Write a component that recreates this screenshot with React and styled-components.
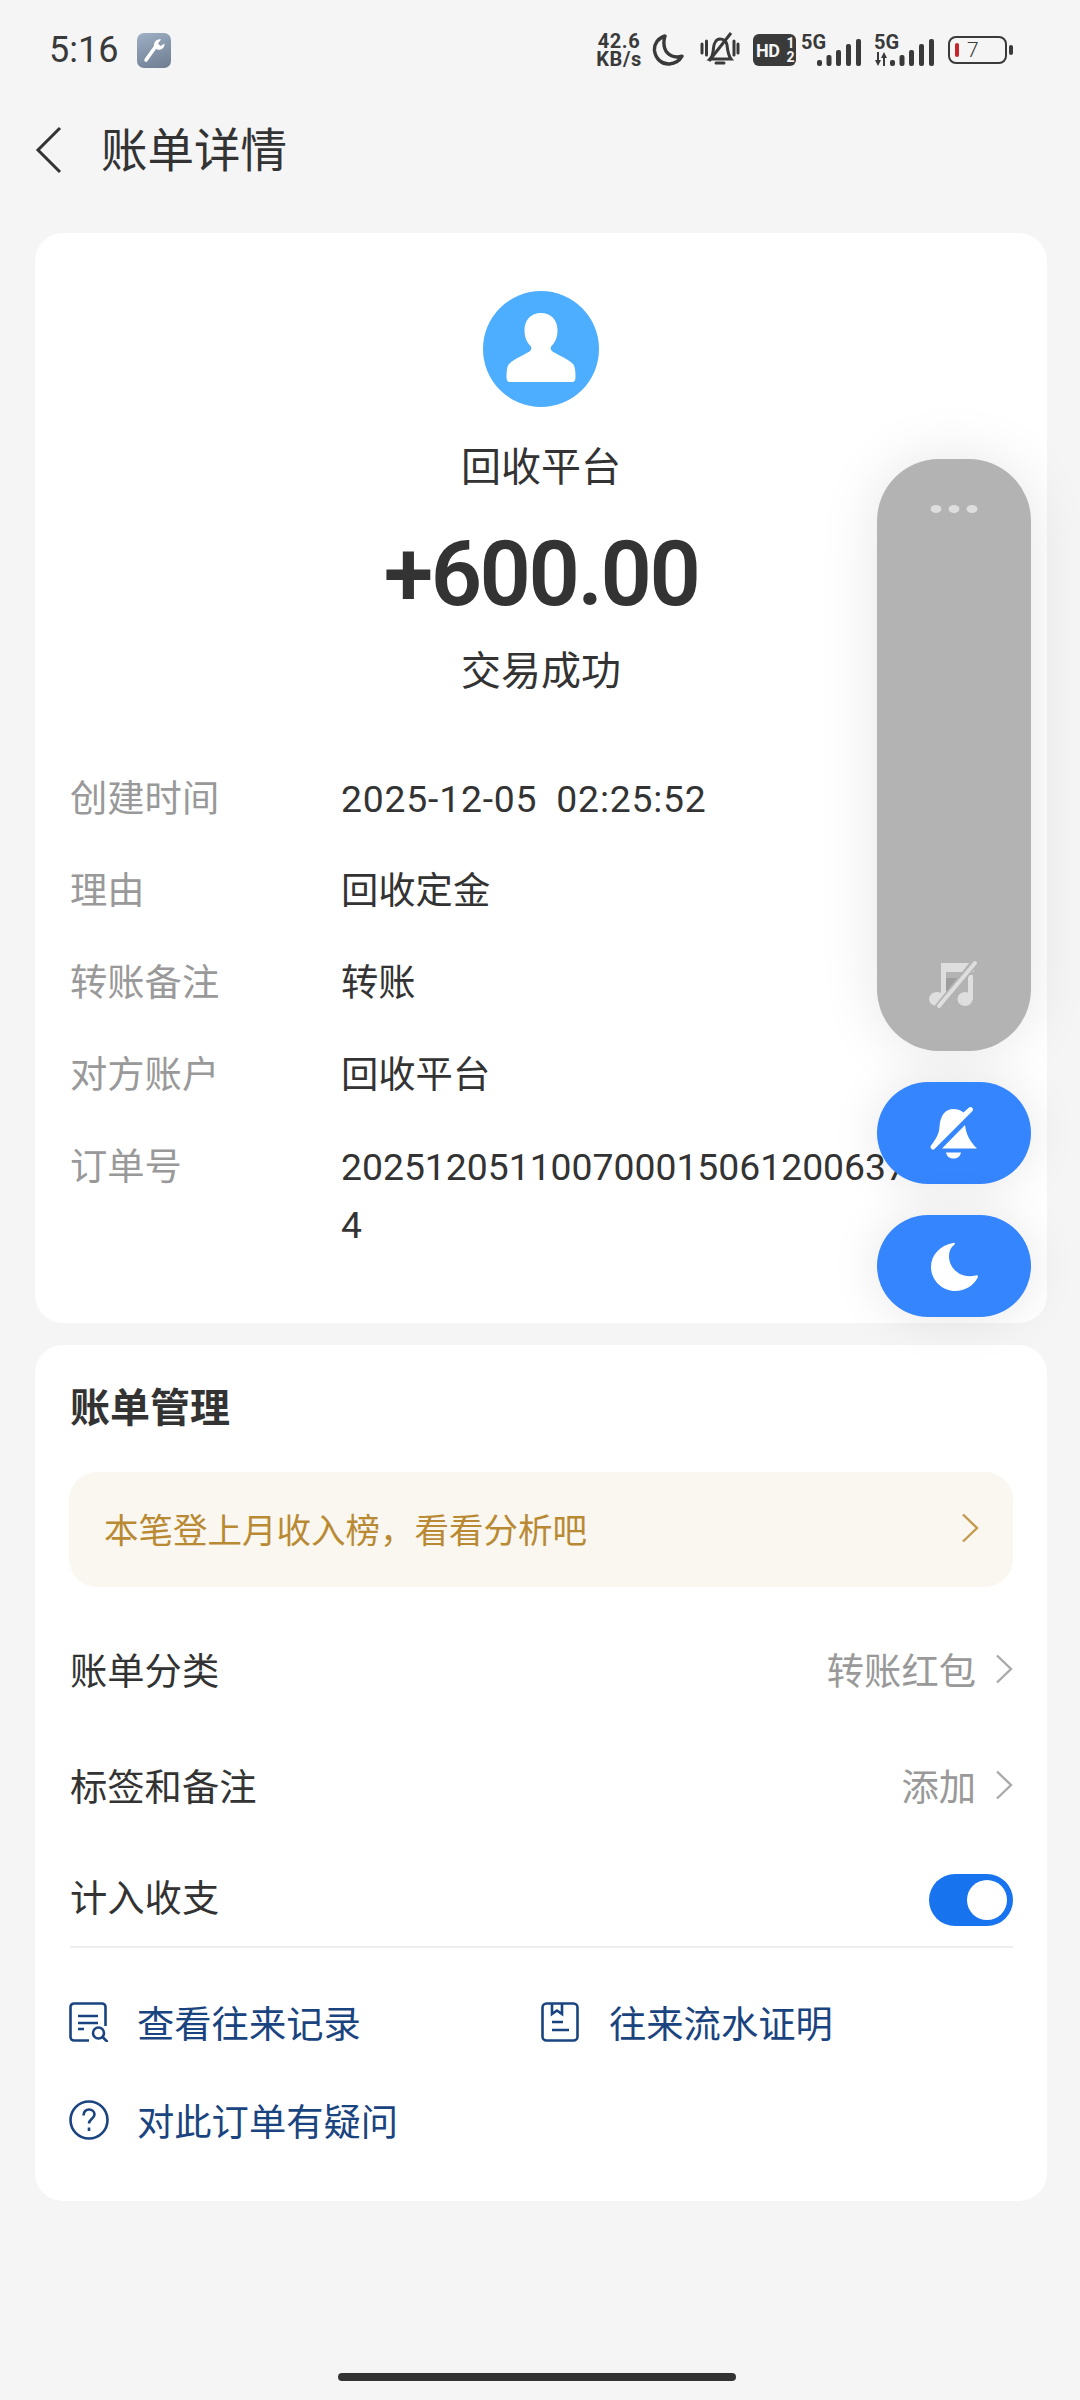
import { createGlobalStyle } from 'styled-components';
import styled from 'styled-components';

const GlobalStyle = createGlobalStyle`
  html, body {
    margin: 0;
    padding: 0;
    background: #f5f5f5;
  }
  * {
    box-sizing: border-box;
  }
`;

const Page = styled.div`
  position: relative;
  width: 1080px;
  height: 2400px;
  overflow: hidden;
  background: #f5f5f5;
  color: #333;
  font-family: Roboto, "Noto Sans CJK SC", sans-serif;
  font-size: 37.3px;
`;

const StatusBar = styled.div`
  display: flex;
  align-items: center;
  height: 100px;
  padding: 0 67px 0 49px;
`;

const Time = styled.span`
  font-size: 36px;
  line-height: 100px;
  color: #3a3a3a;
`;

const AppBadge = styled.span`
  display: flex;
  align-items: center;
  justify-content: center;
  width: 34px;
  height: 35px;
  margin-left: 19px;
  border-radius: 7px;
  background: linear-gradient(160deg, #9fb0c4, #6d7c90);
`;

const StatusIcons = styled.div`
  display: flex;
  align-items: center;
  margin-left: auto;
`;

const Speed = styled.span`
  display: flex;
  flex-direction: column;
  align-items: center;
  width: 50px;
  font-size: 20px;
  font-weight: 700;
  letter-spacing: 0.6px;
  color: #3a3a3a;
`;

const SpeedLine = styled.span`
  display: block;
  height: 18px;
  line-height: 18px;
`;

const StatusIcon = styled.svg`
  display: block;
  flex: none;
  margin-left: ${(props) => props.$gap || 0}px;
`;

const Header = styled.header`
  display: flex;
  align-items: center;
  height: 100px;
  padding-left: 34px;
`;

const Title = styled.h1`
  margin: 2px 0 0 37px;
  font-size: 46.5px;
  font-weight: 400;
  line-height: 100px;
  color: #333;
`;

const Card = styled.section`
  margin: ${(props) => props.$top}px 33px 0 35px;
  height: ${(props) => props.$height}px;
  border-radius: 28px;
  background: #fff;
`;

const Party = styled.div`
  display: flex;
  flex-direction: column;
  align-items: center;
  padding-top: 58px;
`;

const Avatar = styled.svg`
  display: block;
`;

const PartyName = styled.div`
  margin-top: 34px;
  font-size: 40px;
  line-height: 54px;
`;

const Amount = styled.div`
  margin-top: 30px;
  font-size: 90px;
  font-weight: 600;
  line-height: 100px;
  letter-spacing: -2.5px;
  color: #333;
`;

const PartyStatus = styled.div`
  margin-top: 20px;
  font-size: 40px;
  line-height: 54px;
`;

const InfoList = styled.div`
  display: flex;
  flex-direction: column;
  gap: 34px;
  margin-top: 71px;
  padding: 0 35px;
`;

const InfoRow = styled.div`
  display: flex;
  line-height: 58px;
`;

const InfoLabel = styled.span`
  flex: none;
  width: 271px;
  color: #999;
`;

const InfoValue = styled.span`
  flex: 1;
  min-width: 0;
  word-break: break-all;
  color: #333;
  word-spacing: ${(props) => (props.$wide ? '9px' : '0')};
  letter-spacing: ${(props) => (props.$wide ? '0.8px' : '0')};
`;

const ManageTitle = styled.h2`
  margin: 0;
  padding: 37px 35px 0;
  font-size: 40px;
  font-weight: 700;
  line-height: 54px;
  color: #333;
`;

const Banner = styled.div`
  display: flex;
  align-items: center;
  justify-content: space-between;
  height: 115px;
  margin: 36px 34px 0;
  padding: 0 34px 3px 35px;
  border-radius: 28px;
  background: #faf7f1;
  font-size: 34.5px;
  color: #b98a33;
`;

const SettingRow = styled.div`
  display: flex;
  align-items: center;
  justify-content: space-between;
  height: ${(props) => props.$height}px;
  margin: ${(props) => props.$top || 0}px 34px 0 35px;
`;

const SettingValue = styled.span`
  display: flex;
  align-items: center;
  gap: 19px;
  color: #999;
`;

const Toggle = styled.span`
  display: flex;
  align-items: center;
  justify-content: flex-end;
  width: 84px;
  height: 52px;
  margin-top: 8px;
  padding-right: 6px;
  border-radius: 26px;
  background: #1873ee;
`;

const ToggleKnob = styled.span`
  width: 40px;
  height: 40px;
  border-radius: 50%;
  background: #fff;
`;

const Divider = styled.div`
  height: 2px;
  margin: 0 34px 0 35px;
  background: #eceef0;
`;

const Links = styled.div`
  display: grid;
  grid-template-columns: 472px 1fr;
  row-gap: 40px;
  padding: 45px 34px 0;
`;

const LinkItem = styled.a`
  display: flex;
  align-items: center;
  gap: 28px;
  height: 58px;
  color: #1a4480;
`;

const FloatPanel = styled.div`
  position: absolute;
  top: 459px;
  left: 877px;
  display: flex;
  flex-direction: column;
  gap: 31px;
  width: 154px;
`;

const Drawer = styled.div`
  display: flex;
  flex-direction: column;
  align-items: center;
  justify-content: space-between;
  height: 592px;
  padding: 44px 0 41px;
  border-radius: 62px;
  background: #b3b3b3;
  box-shadow: 0 0 60px rgba(0, 0, 0, 0.1);
`;

const Pill = styled.div`
  display: flex;
  align-items: center;
  justify-content: center;
  height: 102px;
  border-radius: 51px;
  background: #3585fe;
  box-shadow: 0 0 50px rgba(0, 0, 0, 0.1);
`;

const HomeBar = styled.div`
  position: absolute;
  left: 338px;
  top: 2373px;
  width: 398px;
  height: 8px;
  border-radius: 4px;
  background: #333;
`;

const Chevron = ({ color = '#aaa', w = 18, h = 30 }) => (
  <svg width={w} height={h} viewBox="0 0 18 30" fill="none">
    <path d="M2 1.5 16 15 2 28.5" stroke={color} strokeWidth="2.4" />
  </svg>
);

const Bars = () => (
  <svg width="44" height="27" viewBox="0 0 44 27" fill="#3a3a3a">
    <rect x="0" y="21" width="5" height="6" rx="2" />
    <rect x="9.500" y="16" width="5" height="11" rx="2" />
    <rect x="19" y="11" width="5" height="16" rx="2" />
    <rect x="29" y="5" width="5" height="22" rx="2" />
    <rect x="39" y="0" width="5" height="27" rx="2" />
  </svg>
);

const NetworkWrap = styled.span`
  position: relative;
  display: block;
  flex: none;
  margin-left: ${(props) => props.$gap}px;
`;

const NetworkLabel = styled.span`
  position: absolute;
  left: 0;
  top: -2px;
  font-size: 20px;
  font-weight: 700;
  line-height: 20px;
  color: #3a3a3a;
`;

const NetworkBars = styled.span`
  display: flex;
  align-items: flex-end;
  justify-content: flex-end;
  gap: 2px;
  width: 60px;
  height: 32px;
`;

const Network = ({ arrows, gap }) => (
  <NetworkWrap $gap={gap}>
    <NetworkLabel>5G</NetworkLabel>
    <NetworkBars>
      {arrows && (
        <svg width="14" height="14" viewBox="0 0 14 14" fill="#3a3a3a">
          <path d="M3 0h2v8h2L4 14 1 8h2ZM9 14h2V6h2L10 0 7 6h2Z" />
        </svg>
      )}
      <Bars />
    </NetworkBars>
  </NetworkWrap>
);

const HdBadge = styled.span`
  display: flex;
  align-items: center;
  justify-content: space-between;
  width: 43px;
  height: 32px;
  margin-left: 13px;
  padding: 0 2px 0 3px;
  border-radius: 6px;
  background: #3a3a3a;
  color: #f5f5f5;
  font-size: 18px;
  font-weight: 700;
  letter-spacing: -0.5px;
`;

const HdDigits = styled.span`
  display: flex;
  flex-direction: column;
  font-size: 14px;
  line-height: 14px;
`;

const Battery = styled.span`
  display: flex;
  align-items: center;
  margin-left: 14px;
`;

const BatteryShell = styled.span`
  display: flex;
  align-items: center;
  width: 59px;
  height: 28px;
  padding-left: 5px;
  border: 2.500px solid #3a3a3a;
  border-radius: 8px;
`;

const BatteryLevel = styled.span`
  width: 4px;
  height: 14px;
  border-radius: 2px;
  background: #c8242b;
`;

const BatteryText = styled.span`
  margin-left: 8px;
  font-size: 21px;
  font-weight: 300;
  line-height: 22px;
  color: #3a3a3a;
`;

const BatteryNub = styled.span`
  width: 4px;
  height: 10px;
  margin-left: 2px;
  border-radius: 2px;
  background: #3a3a3a;
`;

const infoRows = [
  ['创建时间', '2025-12-05 02:25:52', true],
  ['理由', '回收定金'],
  ['转账备注', '转账'],
  ['对方账户', '回收平台'],
];

export default function App() {
  return (
    <Page>
      <GlobalStyle />
      <StatusBar>
        <Time>5:16</Time>
        <AppBadge>
          <svg width="24" height="26" viewBox="0 0 24 26" fill="none">
            <path d="M4 23 14 9" stroke="#fff" strokeWidth="3.600" strokeLinecap="round" />
            <path d="M12 9c-.5-4 3-7.500 7-6.500l-3 4 2.500 2.500 4-2.500c.5 4-3.500 7.500-7.500 6Z" fill="#fff" />
          </svg>
        </AppBadge>
        <StatusIcons>
          <Speed>
            <SpeedLine>42.6</SpeedLine>
            <SpeedLine>KB/s</SpeedLine>
          </Speed>
          <StatusIcon $gap={8} width="32" height="32" viewBox="0 0 32 32">
            <path
              d="M13 2C6 4 2 10 2.500 16.500 3.500 25 10 30.500 17.500 30c5.500-.4 10-3.300 12.500-7.800-7.500 2.300-15-1-17.300-8C11.400 10 11.700 6 13 2Z"
              fill="none"
              stroke="#3a3a3a"
              strokeWidth="3.400"
              strokeLinejoin="round"
            />
          </StatusIcon>
          <StatusIcon $gap={16} width="40" height="36" viewBox="0 0 40 36" fill="none" stroke="#3a3a3a" strokeWidth="3">
            <path d="M10 27c3-3 3-6 3.500-11 .5-5 3-9 6.500-9s6.500 2.500 7 6c.5 5 1 10 4 14Z" fill="none" />
            <path d="M31 1 9 29" />
            <path d="M16 31h8" strokeLinecap="round" />
            <path d="M2 12v9M6.500 9v14M34 9v14M38 12v9" strokeLinecap="round" />
          </StatusIcon>
          <HdBadge>HD<HdDigits><span>1</span><span>2</span></HdDigits></HdBadge>
          <Network gap={5} />
          <Network arrows gap={13} />
          <Battery>
            <BatteryShell>
              <BatteryLevel />
              <BatteryText>7</BatteryText>
            </BatteryShell>
            <BatteryNub />
          </Battery>
        </StatusIcons>
      </StatusBar>
      <Header>
        <svg width="30" height="48" viewBox="0 0 30 48" fill="none">
          <path d="M26 2 4 24l22 22" stroke="#333" strokeWidth="3" />
        </svg>
        <Title>账单详情</Title>
      </Header>
      <Card $top={33} $height={1090}>
        <Party>
          <Avatar width="116" height="116" viewBox="0 0 116 116">
            <circle cx="58" cy="58" r="58" fill="#4dadfe" />
            <path
              d="M58 22c-10 0-16.500 7-16.500 17 0 7 2 12 6 16 1.500 1.500 1 4-1 5.500-7 4.500-15 7-20 12-2 2-3 5.500-3 13.500 0 3 1 5 3 5h63c2 0 3-2 3-5 0-8-1-11.500-3-13.500-5-5-13-7.500-20-12-2-1.500-2.500-4-1-5.500 4-4 6-9 6-16 0-10-6.500-17-16.500-17Z"
              fill="#fff"
            />
          </Avatar>
          <PartyName>回收平台</PartyName>
          <Amount>+600.00</Amount>
          <PartyStatus>交易成功</PartyStatus>
        </Party>
        <InfoList>
          {infoRows.map(([label, value, wide]) => (
            <InfoRow key={label}>
              <InfoLabel>{label}</InfoLabel>
              <InfoValue $wide={wide}>{value}</InfoValue>
            </InfoRow>
          ))}
          <InfoRow>
            <InfoLabel>订单号</InfoLabel>
            <InfoValue>202512051100700015061200637<br />4</InfoValue>
          </InfoRow>
        </InfoList>
      </Card>
      <Card $top={22} $height={856}>
        <ManageTitle>账单管理</ManageTitle>
        <Banner>
          本笔登上月收入榜，看看分析吧
          <Chevron color="#c39a4e" />
        </Banner>
        <SettingRow $height={119} $top={22}>
          账单分类
          <SettingValue>转账红包<Chevron /></SettingValue>
        </SettingRow>
        <SettingRow $height={114}>
          标签和备注
          <SettingValue>添加<Chevron /></SettingValue>
        </SettingRow>
        <SettingRow $height={101} $top={3}>
          计入收支
          <Toggle><ToggleKnob /></Toggle>
        </SettingRow>
        <Divider />
        <Links>
          <LinkItem>
            <svg width="40" height="40" viewBox="0 0 40 40" fill="none" stroke="#1a4480" strokeWidth="2.600">
              <path d="M20 38.500H5A3.500 3.500 0 0 1 1.500 35V5A3.500 3.500 0 0 1 5 1.500h28A3.500 3.500 0 0 1 36.500 5v19" />
              <path d="M9 14h20M9 21h20M9 27h6" />
              <circle cx="29.500" cy="31" r="5.500" />
              <path d="m33.500 35 5 5" />
            </svg>
            查看往来记录
          </LinkItem>
          <LinkItem>
            <svg width="40" height="40" viewBox="0 0 40 40" fill="none" stroke="#1a4480" strokeWidth="2.600">
              <rect x="1.500" y="1.500" width="35" height="37" rx="4" />
              <path d="M11 2v10l5-3.500 5 3.500V2M11 20h11M11 28h17" />
            </svg>
            往来流水证明
          </LinkItem>
          <LinkItem>
            <svg width="40" height="40" viewBox="0 0 40 40" fill="none" stroke="#1a4480" strokeWidth="2.600">
              <circle cx="20" cy="20" r="18.500" />
              <path d="M14.500 15.500c0-4 2.500-6 5.500-6s5.500 2 5.500 5c0 4-5.500 4.500-5.500 9" />
              <path d="M20 27.500v3.500" />
            </svg>
            对此订单有疑问
          </LinkItem>
        </Links>
      </Card>
      <FloatPanel>
        <Drawer>
          <svg width="48" height="12" viewBox="0 0 48 12" fill="#ddd">
            <ellipse cx="6" cy="6" rx="5.500" ry="4" />
            <ellipse cx="24" cy="6" rx="5.500" ry="4" />
            <ellipse cx="42" cy="6" rx="5.500" ry="4" />
          </svg>
          <svg width="50" height="50" viewBox="0 2 50 50">
            <path d="M12 5h33v9H17v23h-5Z" fill="#dedede" />
            <ellipse cx="8" cy="41" rx="8" ry="7" fill="#dedede" />
            <ellipse cx="36" cy="41" rx="7.500" ry="7" fill="#dedede" />
            <path d="M39 17h5v25h-5Z" fill="#dedede" />
            <path d="M17 20h13L17 34Z" fill="#9d9d9d" />
            <path d="M47 3 9 50" stroke="#b3b3b3" strokeWidth="8" />
            <path d="M46 5 10 48" stroke="#dedede" strokeWidth="4" strokeLinecap="round" />
          </svg>
        </Drawer>
        <Pill>
          <svg width="50" height="56" viewBox="20 4 50 56" fill="#fff">
            <path d="M60 6.500a2.500 2.500 0 0 1 3.500 3.500L26 47.500a2.500 2.500 0 0 1-4-3C27 38 30 33 30.500 26 31 14 37 8 44 8c4 0 8 1 10.500 3.500Z" />
            <path d="M56 24c1 9 5 17 12 23.500H33Z" />
            <path d="M37 51.500h15c-1 4.500-4 6-7.500 6S38 56 37 51.500Z" />
          </svg>
        </Pill>
        <Pill>
          <svg width="47" height="50" viewBox="0 0 47 50" fill="#fff">
            <path d="M22 2C9 4.500 0 14 0 26c0 13 11 24 24 24 10 0 19-5.500 23-14 0-1.500-1-2-2.500-1.500C30 38 18 28 18 15c0-5 2-9 5.500-11.500 1-1 0-2-1.500-1.500Z" />
          </svg>
        </Pill>
      </FloatPanel>
      <HomeBar />
    </Page>
  );
}
